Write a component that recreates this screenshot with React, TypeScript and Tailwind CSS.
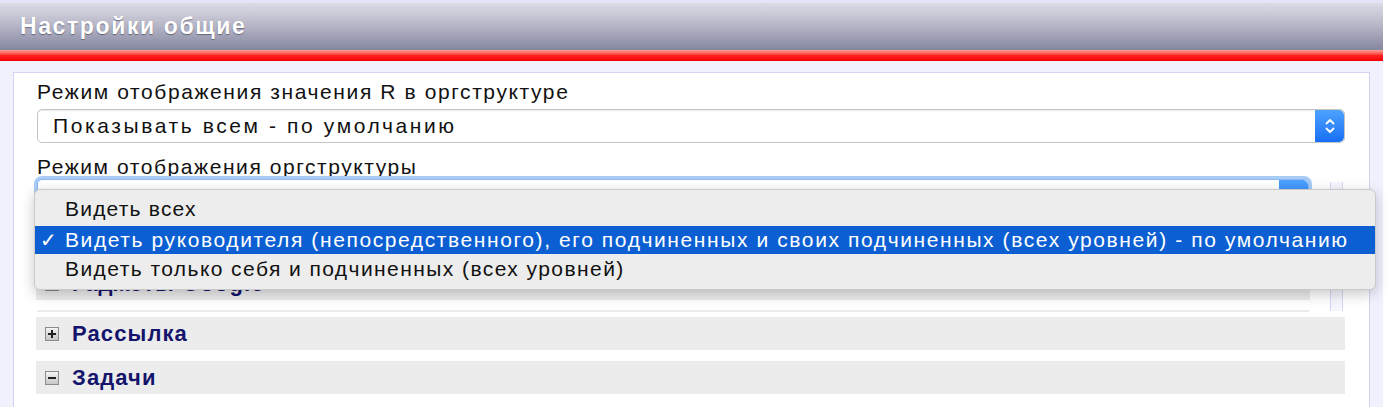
import React from "react";

const font = { fontFamily: '"Liberation Sans", Arial, sans-serif' };

function Stepper({ className = "" }: { className?: string }) {
  return (
    <div
      className={
        "flex w-[29px] shrink-0 items-center justify-center rounded-r-[5px] bg-gradient-to-b from-[#4ea2ff] to-[#166ff4] " +
        className
      }
    >
      <svg width="12" height="20" viewBox="0 0 12 20" fill="none">
        <path d="M2.5 7.5 L6 4 L9.5 7.5" stroke="white" strokeWidth="1.8" strokeLinecap="round" strokeLinejoin="round" />
        <path d="M2.5 12.5 L6 16 L9.5 12.5" stroke="white" strokeWidth="1.8" strokeLinecap="round" strokeLinejoin="round" />
      </svg>
    </div>
  );
}

function ToggleIcon({ open }: { open: boolean }) {
  return (
    <div className="flex h-[14px] w-[14px] shrink-0 items-center justify-center border border-[#8c8c8c] bg-gradient-to-b from-[#f4f4f4] to-[#c6c6c6]">
      <svg width="10" height="10" viewBox="0 0 10 10">
        <rect x="1" y="4" width="8" height="2" fill="#202020" />
        {!open && <rect x="4" y="1" width="2" height="8" fill="#202020" />}
      </svg>
    </div>
  );
}

function SectionRow({ title, open, className = "" }: { title: string; open: boolean; className?: string }) {
  return (
    <div className={"flex h-[33px] items-center gap-[13px] bg-[#ececec] pl-[9px] " + className}>
      <ToggleIcon open={open} />
      <span className="text-[22px] font-bold leading-none tracking-[1.1px] text-[#14146c]">{title}</span>
    </div>
  );
}

export default function App() {
  return (
    <div className="h-[407px] w-[1389px] overflow-hidden bg-white text-[#111]" style={font}>
      <div className="w-[1383px] bg-[#f1f1fe]">
        <div className="h-[3px] bg-[#e4e4f8]" />
        <div className="flex h-[47px] items-center bg-gradient-to-b from-[#dcdce6] via-[#b4b4c6] to-[#85879f] pl-[20px]">
          <span className="text-[23px] font-bold tracking-[1.6px] text-white [text-shadow:0_1px_1px_rgba(60,60,80,0.6)]">
            Настройки общие
          </span>
        </div>
        <div className="h-[11px] bg-gradient-to-b from-[#ff9a9a] via-[#ff2020] to-[#f00000]" />
        <div className="px-[13px] pt-[11px]">
          <div className="relative h-[340px] border border-[#d2d2f4] bg-white pl-[23px] pr-[24px] pt-[7px]">
            <div className="text-[21px] leading-[24px] tracking-[1.6px]">Режим отображения значения R в оргструктуре</div>
            <div className="mt-[5px] flex h-[34px] overflow-hidden rounded-[5px] border border-[#c4c4c4] bg-white shadow-[inset_0_1px_1px_rgba(0,0,0,0.08)]">
              <div className="flex flex-1 items-center pl-[15px] text-[21px] tracking-[2.6px]">Показывать всем - по умолчанию</div>
              <Stepper />
            </div>
            <div className="mt-[12px] text-[21px] leading-[24px] tracking-[1.57px]">Режим отображения оргструктуры</div>

            <div className="flex">
              <div className="w-[1272px]">
                <div className="flex h-[34px] overflow-hidden rounded-[5px] border border-[#8fb9f2] bg-white ring-[3px] ring-[#a8cbf6]">
                  <div className="flex-1" />
                  <Stepper />
                </div>
                <SectionRow title="Гаджеты Google" open={false} className="mt-[54px] -mx-[1px]" />
                <div className="mt-[10px] h-[2px] bg-[#ececec]" />
              </div>
              <div className="ml-[21px] mt-[3px] h-[129px] w-[13px] border-x border-[#d6d6f4] bg-[#f6f6ff]" />
            </div>

            <SectionRow title="Рассылка" open={false} className="mt-[5px] -ml-[1px]" />
            <SectionRow title="Задачи" open={true} className="mt-[11px] -ml-[1px]" />

            <div className="absolute left-[20px] top-[116px] w-[1342px] overflow-hidden rounded-[6px] border border-[#c9c9c9] bg-[#ededed] pb-[6px] pt-[3px] text-[21px] shadow-[0_4px_14px_rgba(0,0,0,0.22)]">
              <div className="flex h-[31px] items-center pl-[30px] tracking-[1.2px]">Видеть всех</div>
              <div className="mt-[2px] flex h-[28px] items-center bg-[#0b5fd2] text-white">
                <span className="w-[30px] pl-[5px] text-[20px]">✓</span>
                <span className="whitespace-nowrap tracking-[1.6px]">
                  Видеть руководителя (непосредственного), его подчиненных и своих подчиненных (всех уровней) - по умолчанию
                </span>
              </div>
              <div className="flex h-[29px] items-center pl-[30px] tracking-[1.43px]">
                Видеть только себя и подчиненных (всех уровней)
              </div>
            </div>
          </div>
        </div>
      </div>
    </div>
  );
}
